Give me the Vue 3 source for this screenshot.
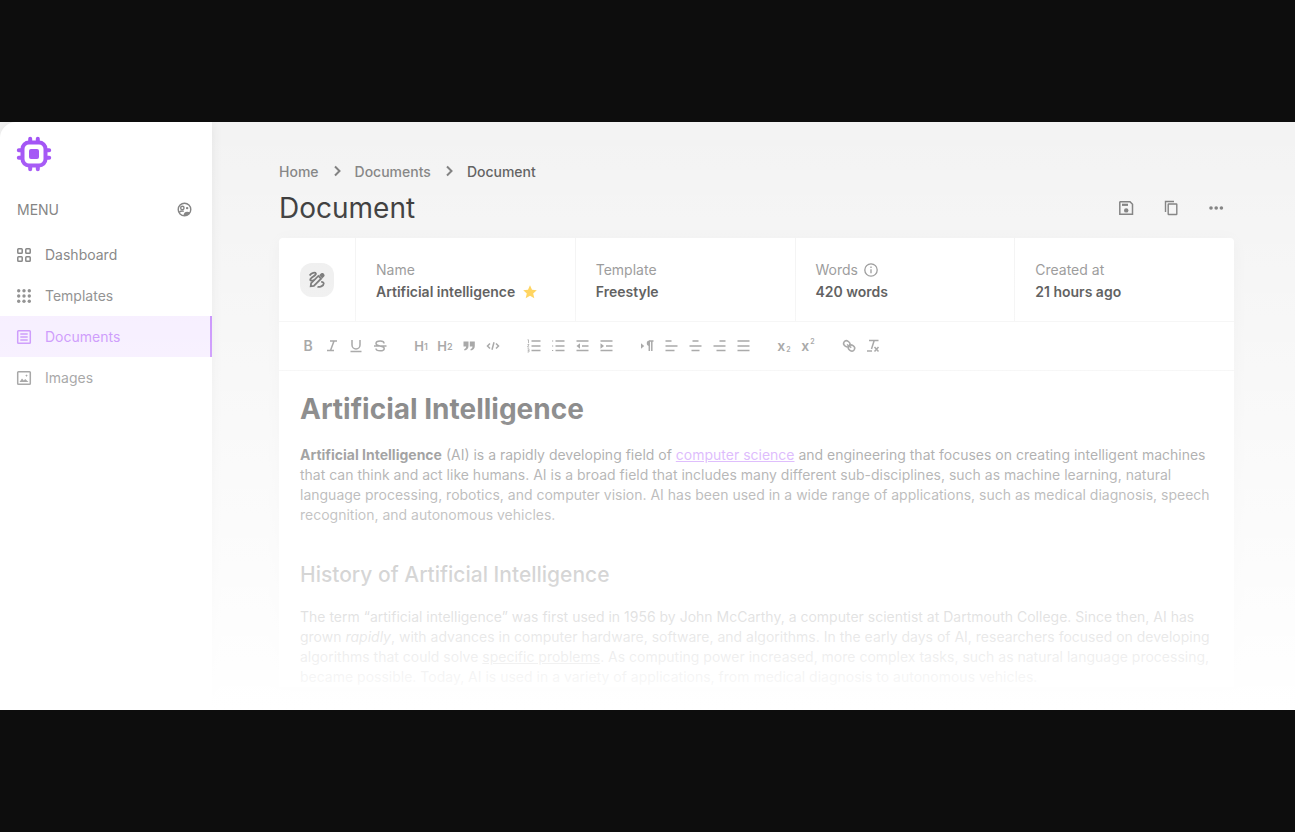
<script setup>
const menu = [
  { label: 'Dashboard', icon: 'grid' },
  { label: 'Templates', icon: 'dots' },
  { label: 'Documents', icon: 'doc', active: true },
  { label: 'Images', icon: 'image' },
]

const tools = [
  [
    { name: 'Bold', text: 'B', cls: 'bold' },
    { name: 'Italic', icon: '<path d="M6 3h7M3 12.500h7M10 3 6.500 12.500"/>' },
    { name: 'Underline', icon: '<path d="M4 2v5a4 4 0 0 0 8 0V2M2.500 13.500h11"/>' },
    { name: 'Strikethrough', icon: '<path d="M12 5.500C12 4 10.500 3 8.200 3S4 4 4 5.500C4 7 5.500 7.500 8 8s4.200 1 4.200 2.400S10.500 12.800 8.200 12.800 4 12 4 10.500M2 8h12.500"/>' },
  ],
  [
    { name: 'Heading 1', text: 'H', small: '1', cls: 'heading' },
    { name: 'Heading 2', text: 'H', small: '2', cls: 'heading' },
    { name: 'Quote', icon: '<path class="solid" d="M2.500 3.500h5v4.500c0 2.500-1.500 4-4 4.500l-.4-1.300c1.300-.4 2-1.200 2.100-2.700H2.500zM8.800 3.500h5v4.500c0 2.500-1.500 4-4 4.500l-.4-1.300c1.300-.4 2-1.200 2.100-2.700H8.800z"/>' },
    { name: 'Code', icon: '<path d="M5 5.500 2.500 8 5 10.500M11 5.500 13.500 8 11 10.500M9 4.200 7 11.800"/>' },
  ],
  [
    { name: 'Ordered list', icon: '<path d="M5.500 3h9M5.500 8h9M5.500 12.500h9"/><path class="fine" d="M1.500 1.800h1v3.400M1.500 6.500h1.500L1.500 9h1.700M1.500 10.800h1.500v3.200H1.500M1.700 12.400H3"/>' },
    { name: 'Bullet list', icon: '<path d="M5.500 3h9M5.500 8h9M5.500 12.500h9"/><path class="solid" d="M2 2.400h1.200v1.200H2zM2 7.400h1.200v1.200H2zM2 11.900h1.200v1.200H2z"/>' },
    { name: 'Outdent', icon: '<path d="M2.500 3h12M8 8h6.500M2.500 12.500h12"/><path class="solid" d="M2.500 8 6 5.300v5.400z"/>' },
    { name: 'Indent', icon: '<path d="M2.500 3h12M8 8h6.500M2.500 12.500h12"/><path class="solid" d="M6 8 2.500 5.300v5.400z"/>' },
  ],
  [
    { name: 'Text direction', icon: '<path class="solid" d="M5.200 8 2 5.300v5.400zM10.500 2.500v5.500a2.700 2.700 0 0 1 0-5.500z"/><path d="M10.300 3v10M12.800 3v10M10 3h4.500"/>' },
    { name: 'Align left', icon: '<path d="M2.500 3h6M2.500 8h12M2.500 12.500h9"/>' },
    { name: 'Align center', icon: '<path d="M5.500 3h6M2.500 8h12M4.500 12.500h8"/>' },
    { name: 'Align right', icon: '<path d="M8.500 3h6M2.500 8h12M5.500 12.500h9"/>' },
    { name: 'Justify', icon: '<path d="M2.500 3h12M2.500 8h12M2.500 12.500h12"/>' },
  ],
  [
    { name: 'Subscript', text: 'x', small: '2', cls: 'script sub' },
    { name: 'Superscript', text: 'x', small: '2', cls: 'script sup' },
  ],
  [
    { name: 'Link', icon: '<ellipse cx="5.800" cy="5.800" rx="3.300" ry="2.800" transform="rotate(35 5.800 5.800)"/><ellipse cx="10.500" cy="10" rx="3.300" ry="2.800" transform="rotate(35 10.500 10)"/><path d="m6 6.500 4.300 3.200"/>' },
    { name: 'Clear formatting', icon: '<path d="M4 2.500h9.500M9.200 2.500 6.500 11M2 13h5M9.500 9l4 4.500M13.500 9l-4 4.500"/>' },
  ],
]
</script>

<template>
  <div class="page">
    <div class="app">
      <aside class="sidebar">
        <a class="logo" href="#" aria-label="Home page">
          <svg viewBox="0 0 36 36" fill="none" stroke="#a04ff5" stroke-linecap="round">
            <rect x="6.500" y="6.500" width="23" height="23" rx="6.500" stroke-width="4" />
            <path d="M14.200 2.800v3M21.800 2.800v3M14.200 30.200v3M21.800 30.200v3M2.800 14.200h3M2.800 21.800h3M30.200 14.200h3M30.200 21.800h3" stroke-width="4" />
            <rect x="13" y="13" width="10" height="10" rx="2" fill="#a04ff5" stroke="none" />
          </svg>
        </a>
        <div class="menu-head">
          <span>MENU</span>
          <button type="button" aria-label="Team">
            <svg viewBox="0 0 16 16" fill="none" stroke="currentColor" stroke-width="1.500">
              <circle cx="8" cy="8" r="6.700" />
              <circle cx="5.700" cy="6.300" r="1.800" />
              <circle cx="10.800" cy="6.500" r="1.300" fill="currentColor" stroke="none" />
              <path d="M2.200 11c2-1.500 4-1.500 5-1" />
              <path d="M7 14.500c0-3.500 2.500-5 7-3.500-1.500 2.800-4 4-7 3.500z" fill="currentColor" stroke="none" />
            </svg>
          </button>
        </div>
        <nav>
          <a v-for="m in menu" :key="m.label" href="#" :class="{ active: m.active }">
            <svg viewBox="0 0 16 16" fill="none" stroke="currentColor" stroke-width="1.500">
              <template v-if="m.icon === 'grid'">
                <rect x="1.800" y="1.800" width="4.400" height="4.400" rx="0.800" />
                <rect x="9.800" y="1.800" width="4.400" height="4.400" rx="0.800" />
                <rect x="1.800" y="9.800" width="4.400" height="4.400" rx="0.800" />
                <rect x="9.800" y="9.800" width="4.400" height="4.400" rx="0.800" />
              </template>
              <g v-else-if="m.icon === 'dots'" fill="currentColor" stroke="none">
                <circle v-for="n in 9" :key="n" :cx="2.700 + ((n - 1) % 3) * 5.300" :cy="2.700 + Math.floor((n - 1) / 3) * 5.300" r="1.700" />
              </g>
              <template v-else-if="m.icon === 'doc'">
                <rect x="1.700" y="1.700" width="12.600" height="12.600" rx="0.800" />
                <path d="M4.300 5h7.400M4.300 8h7.400M4.300 11h7.400" />
              </template>
              <template v-else>
                <rect x="1.700" y="1.700" width="12.600" height="12.600" rx="0.800" />
                <path d="m3.500 12 2.500-3.500 1.800 2 1.400-1.500 3.300 3zM10.500 4.200l.5 1 1 .4-1 .5-.5 1-.5-1-1-.5 1-.4z" fill="currentColor" stroke="none" />
              </template>
            </svg>
            <span>{{ m.label }}</span>
          </a>
        </nav>
      </aside>

      <main>
        <nav class="crumbs" aria-label="Breadcrumb">
          <a href="#">Home</a>
          <svg viewBox="0 0 10 12"><path d="m3 1.500 4.500 4.500L3 10.500" /></svg>
          <a href="#">Documents</a>
          <svg viewBox="0 0 10 12"><path d="m3 1.500 4.500 4.500L3 10.500" /></svg>
          <span>Document</span>
        </nav>
        <header>
          <h1>Document</h1>
          <div class="actions">
            <button type="button" aria-label="Save">
              <svg viewBox="0 0 16 16" fill="none" stroke="currentColor" stroke-width="1.500">
                <path d="M2.200 1.800h9.800l2.500 2.500v9.900H1.800V2.200z" />
                <path d="M4 4.800h6" stroke-width="2.200" />
                <circle cx="8.200" cy="10.400" r="2.200" fill="currentColor" stroke="none" />
              </svg>
            </button>
            <button type="button" aria-label="Copy">
              <svg viewBox="0 0 16 16" fill="none" stroke="currentColor" stroke-width="1.400">
                <rect x="5.200" y="4" width="8.600" height="10.500" rx="0.500" />
                <path d="M11 1.500H2.500V12" />
              </svg>
            </button>
            <button type="button" aria-label="More">
              <svg viewBox="0 0 16 16" fill="currentColor">
                <circle cx="3" cy="8" r="1.800" /><circle cx="8.200" cy="8" r="1.800" /><circle cx="13.400" cy="8" r="1.800" />
              </svg>
            </button>
          </div>
        </header>

        <section class="card">
          <div class="info">
            <div class="badge-cell">
              <div class="badge">
                <svg viewBox="0 0 20 20" fill="none" stroke="currentColor" stroke-width="2">
                  <path d="M1.800 5C4 2 8 1 8.800 2.800 9.700 5 2.500 7 2.500 9.700c0 1.800 3 .8 4.500.3" />
                  <path d="m3 17 .5-3.500 8-8 3 3-8 8z" />
                  <path d="m13.800 4.800 2 2 1.500-1.500c.8-.8-1.200-2.800-2-2z" fill="currentColor" />
                  <path d="M10.500 17.500c2 .7 7-.8 7-3.500 0-1.500-1.500-2-2.800-1.700" />
                </svg>
              </div>
            </div>
            <div class="cell">
              <span>Name</span>
              <strong>Artificial intelligence
                <svg class="star" viewBox="0 0 14 14"><path d="m7 .3 2 4.400 4.800.5-3.600 3.200 1.100 4.800L7 10.700l-4.300 2.500 1.100-4.800L.2 5.200 5 4.700z" fill="#ffc421" /></svg>
              </strong>
            </div>
            <div class="cell"><span>Template</span><strong>Freestyle</strong></div>
            <div class="cell">
              <span>Words
                <svg class="hint" viewBox="0 0 14 14" fill="none" stroke="currentColor" stroke-width="1.300"><circle cx="7" cy="7" r="6.200" /><path d="M7 6.200v4M7 3.600v1.400" /></svg>
              </span>
              <strong>420 words</strong>
            </div>
            <div class="cell"><span>Created at</span><strong>21 hours ago</strong></div>
          </div>

          <div class="toolbar" role="toolbar" aria-label="Formatting">
            <div v-for="(group, i) in tools" :key="i" class="group">
              <button v-for="t in group" :key="t.name" type="button" :aria-label="t.name" :class="t.cls">
                <template v-if="t.text">{{ t.text }}<small v-if="t.small">{{ t.small }}</small></template>
                <svg v-else viewBox="0 0 16 16" v-html="t.icon"></svg>
              </button>
            </div>
          </div>

          <article>
            <h2>Artificial Intelligence</h2>
            <p>
              <b>Artificial Intelligence</b> (AI) is a rapidly developing field of <a href="#">computer science</a> and engineering that focuses on creating intelligent machines that can think and act like humans. AI is a broad field that includes many different sub-disciplines, such as machine learning, natural language processing, robotics, and computer vision. AI has been used in a wide range of applications, such as medical diagnosis, speech recognition, and autonomous vehicles.
            </p>
            <h3>History of Artificial Intelligence</h3>
            <p>
              The term “artificial intelligence” was first used in 1956 by John McCarthy, a computer scientist at Dartmouth College. Since then, AI has grown <i>rapidly</i>, with advances in computer hardware, software, and algorithms. In the early days of AI, researchers focused on developing algorithms that could solve <u>specific problems</u>. As computing power increased, more complex tasks, such as natural language processing, became possible. Today, AI is used in a variety of applications, from medical diagnosis to autonomous vehicles.
            </p>
          </article>
        </section>
      </main>
      <div class="fade"></div>
    </div>
  </div>
</template>

<style>
body {
  background: #0d0d0d;
}
</style>

<style scoped>
.page {
  box-sizing: border-box;
  min-height: 100vh;
  padding: 122px 0;
  display: flex;
  background: #0d0d0d;
  font-family: Inter, "Liberation Sans", sans-serif;
  font-size: 14px;
  color: #222;
}
.app {
  position: relative;
  flex: 1;
  display: flex;
  background: #f3f3f3;
  overflow: hidden;
}
.fade {
  position: absolute;
  inset: 0;
  background: linear-gradient(rgba(255, 255, 255, 0), #fff);
  pointer-events: none;
}
button {
  border: 0;
  padding: 0;
  background: none;
  color: inherit;
  font: inherit;
  display: grid;
  place-items: center;
}
a {
  color: inherit;
  text-decoration: none;
}
svg {
  display: block;
}
.sidebar {
  flex: 0 0 212px;
  background: #fff;
  border-top-left-radius: 16px;
  box-shadow: 0 0 12px rgba(0, 0, 0, 0.07);
}
.logo {
  display: block;
  width: 36px;
  margin: 14px 16px 0;
}
.menu-head {
  display: flex;
  justify-content: space-between;
  align-items: center;
  height: 24px;
  margin: 25px 20px 13px 17px;
  color: #707070;
}
.menu-head svg {
  width: 15px;
  height: 15px;
}
.sidebar nav a {
  display: flex;
  align-items: center;
  gap: 13px;
  height: 41px;
  padding-left: 16px;
  box-sizing: border-box;
  color: #666;
}
.sidebar nav svg {
  width: 16px;
  height: 16px;
}
.sidebar nav a.active {
  color: #b366fa;
  background: #f3e8ff;
  border-right: 2px solid #b366fa;
}
main {
  flex: 1;
  min-width: 0;
  padding: 39px 61px 0 67px;
}
.crumbs {
  display: flex;
  align-items: center;
  height: 20px;
  color: #7c7c7c;
  font-weight: 500;
}
.crumbs svg {
  width: 10px;
  height: 12px;
  margin: 0 13px;
  fill: none;
  stroke: #777;
  stroke-width: 2;
}
.crumbs span {
  color: #555;
}
header {
  display: flex;
  justify-content: space-between;
  align-items: center;
  height: 54px;
  padding-bottom: 3px;
}
h1 {
  margin: 0;
  font-size: 28px;
  font-weight: 400;
}
.actions {
  display: flex;
  gap: 29px;
  padding-right: 10px;
  color: #707070;
}
.actions svg {
  width: 16px;
  height: 16px;
}
.card {
  background: #fff;
  border-radius: 4px 4px 0 0;
  box-shadow: 0 2px 16px rgba(0, 0, 0, 0.04);
}
.info {
  display: flex;
  height: 83px;
  border-bottom: 1px solid #f1f1f1;
}
.badge-cell {
  flex: 0 0 76px;
  display: grid;
  place-items: center;
}
.badge {
  display: grid;
  place-items: center;
  width: 34px;
  height: 34px;
  border-radius: 12px;
  background: #ebebeb;
  color: #505050;
}
.badge svg {
  width: 18px;
  height: 18px;
}
.cell {
  flex: 1;
  display: flex;
  flex-direction: column;
  justify-content: center;
  gap: 2px;
  padding: 3px 0 0 20px;
  border-left: 1px solid #f1f1f1;
  line-height: 20px;
}
.cell span {
  display: flex;
  align-items: center;
  gap: 6px;
  color: #7c7c7c;
}
.cell strong {
  display: flex;
  align-items: center;
  gap: 8px;
  font-weight: 600;
}
.hint,
.star {
  width: 14px;
  height: 14px;
}
.toolbar {
  display: flex;
  align-items: center;
  gap: 17px;
  height: 48px;
  padding-left: 17px;
  border-bottom: 1px solid #f1f1f1;
  color: #757575;
}
.group {
  display: flex;
}
.group button {
  display: flex;
  align-items: center;
  justify-content: center;
  width: 24px;
  height: 24px;
  line-height: 16px;
}
.group svg {
  width: 16px;
  height: 16px;
  fill: none;
  stroke: currentColor;
  stroke-width: 1.500;
}
.group :deep(.solid) {
  fill: currentColor;
  stroke: none;
}
.group :deep(.fine) {
  stroke-width: 0.800;
}
.group small {
  font-size: 9px;
}
.group .bold {
  font-weight: 600;
}
.group .heading {
  font-size: 13px;
  font-weight: 600;
}
.group .heading small {
  padding-top: 2px;
}
.group .script {
  font-weight: 600;
}
.group .script small {
  font-size: 7px;
  padding-left: 1px;
}
.group .sub small {
  padding-top: 8px;
}
.group .sup small {
  padding-bottom: 8px;
}
article {
  padding: 18px 21px 0;
  color: #4c4c4c;
}
h2 {
  margin: 0;
  font-size: 28px;
  line-height: 40px;
  font-weight: 700;
  color: #222;
}
p {
  margin: 16px 0 0;
  line-height: 20px;
}
p b {
  font-weight: 700;
  color: #2c2c2c;
}
p a {
  color: #b366fa;
  text-decoration: underline;
}
h3 {
  margin: 34px 0 0;
  font-size: 21px;
  line-height: 32px;
  font-weight: 500;
}
</style>
